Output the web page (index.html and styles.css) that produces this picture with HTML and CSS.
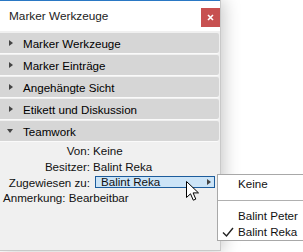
FILE: index.html
```html
<!DOCTYPE html>
<html lang="de">
<head>
    <meta charset="UTF-8">
    <title>Marker Werkzeuge</title>
    <link rel="stylesheet" href="styles.css">
</head>
<body>
    <div class="window">
        <div class="title-bar">
            <span class="title">Marker Werkzeuge</span>
            <span class="close-button">
                <svg width="7" height="7" viewBox="0 0 7 7">
                    <path d="M1 1 L6 6 M6 1 L1 6" stroke="#fff" stroke-width="1.6"/>
                </svg>
            </span>
        </div>

        <div class="panel-body">
            <div class="section"><span class="arrow-right"></span>Marker Werkzeuge</div>
            <div class="section"><span class="arrow-right"></span>Marker Einträge</div>
            <div class="section"><span class="arrow-right"></span>Angehängte Sicht</div>
            <div class="section"><span class="arrow-right"></span>Etikett und Diskussion</div>
            <div class="section"><span class="arrow-down"></span>Teamwork</div>

            <div class="details">
                <span class="label">Von:</span><span class="value">Keine</span>
                <span class="label">Besitzer:</span><span class="value">Balint Reka</span>
                <span class="label">Zugewiesen zu:</span>
                <span class="value">
                    <span class="dropdown">Balint Reka<span class="dropdown-arrow"></span></span>
                </span>
            </div>
            <div class="note">Anmerkung: Bearbeitbar</div>
        </div>
    </div>

    <ul class="popup-menu">
        <li>Keine</li>
        <li class="separator"></li>
        <li>Balint Peter</li>
        <li class="checked">
            <svg class="check" width="12" height="12" viewBox="0 0 12 12">
                <path d="M1 6.5 L4.5 10 L11 2" fill="none" stroke="#222" stroke-width="1.4"/>
            </svg>
            Balint Reka
        </li>
    </ul>

    <svg class="cursor" width="14" height="21" viewBox="0 0 14 21">
        <path d="M0.5 0.5 L0.5 16.5 L4.5 12.8 L7.3 19.2 L9.8 18.1 L7.1 11.9 L12.5 11.9 Z"
              fill="#fff" stroke="#000" stroke-width="1" stroke-linejoin="miter"/>
    </svg>
</body>
</html>
```

FILE: styles.css
```css
html, body {
    margin: 0;
    padding: 0;
}

body {
    width: 303px;
    height: 252px;
    overflow: hidden;
    background: #fff;
    font-family: "Liberation Sans", Arial, sans-serif;
    font-size: 11.6px;
    color: #111;
    position: relative;
}

.window {
    width: 220px;
    height: 251px;
    border-right: 1px solid #c9c9c9;
    display: flex;
    flex-direction: column;
    box-shadow: 3px 0 16px rgba(0, 0, 0, 0.22);
    background: #f0f0f0;
}

.title-bar {
    height: 31px;
    box-sizing: border-box;
    border-top: 1px solid #2a78c4;
    background: #fff;
    display: flex;
    align-items: flex-start;
    justify-content: space-between;
}

.title {
    padding: 8px 0 0 9px;
    font-size: 11.8px;
    color: #222;
}

.close-button {
    width: 19px;
    height: 19px;
    margin-top: 7px;
    background: #c75050;
    display: flex;
    align-items: center;
    justify-content: center;
}

.panel-body {
    flex: 1;
    padding-top: 2px;
    border-bottom: 1px solid #c9c9c9;
}

.section {
    height: 20px;
    margin: 0 1px 2px 0;
    background: #d6d6d6;
    border-radius: 0 2px 2px 0;
    display: flex;
    align-items: center;
    padding-left: 9px;
    box-shadow: 0 1px 0 #fafafa;
    color: #000;
}

.arrow-right {
    width: 0;
    height: 0;
    border-top: 3.5px solid transparent;
    border-bottom: 3.5px solid transparent;
    border-left: 4px solid #444;
    margin-right: 10px;
}

.arrow-down {
    width: 0;
    height: 0;
    border-left: 3.5px solid transparent;
    border-right: 3.5px solid transparent;
    border-top: 4px solid #444;
    margin: 0 10px 0 -2px;
}

.details {
    display: grid;
    grid-template-columns: 90px 1fr;
    column-gap: 3px;
    grid-auto-rows: 16px;
    align-items: center;
    margin-top: -1px;
}

.label {
    text-align: right;
}

.dropdown {
    display: flex;
    align-items: center;
    justify-content: space-between;
    margin-left: 2px;
    width: 120px;
    height: 12px;
    box-sizing: border-box;
    padding: 0 3px 0 5px;
    border: 1px solid #1c5c9c;
    background: #cce4f7;
    line-height: 10px;
}

.dropdown-arrow {
    width: 0;
    height: 0;
    border-top: 3.5px solid transparent;
    border-bottom: 3.5px solid transparent;
    border-left: 4px solid #444;
}

.note {
    height: 16px;
    line-height: 16px;
    padding-left: 3px;
}

.popup-menu {
    position: absolute;
    left: 217px;
    top: 174px;
    width: 88px;
    margin: 0;
    padding: 1px 0 0;
    list-style: none;
    background: #fff;
    border: 1px solid #a8a8a8;
    box-sizing: border-box;
    height: 67px;
}

.popup-menu li {
    height: 16px;
    line-height: 16px;
    padding-left: 20px;
    position: relative;
}

.popup-menu li.separator {
    padding: 0;
    display: flex;
    align-items: center;
}

.popup-menu li.separator::after {
    content: "";
    flex: 1;
    height: 1px;
    background: #b0b0b0;
}

.check {
    position: absolute;
    left: 4px;
    top: 2px;
}

.cursor {
    position: absolute;
    left: 186px;
    top: 181px;
}
```
